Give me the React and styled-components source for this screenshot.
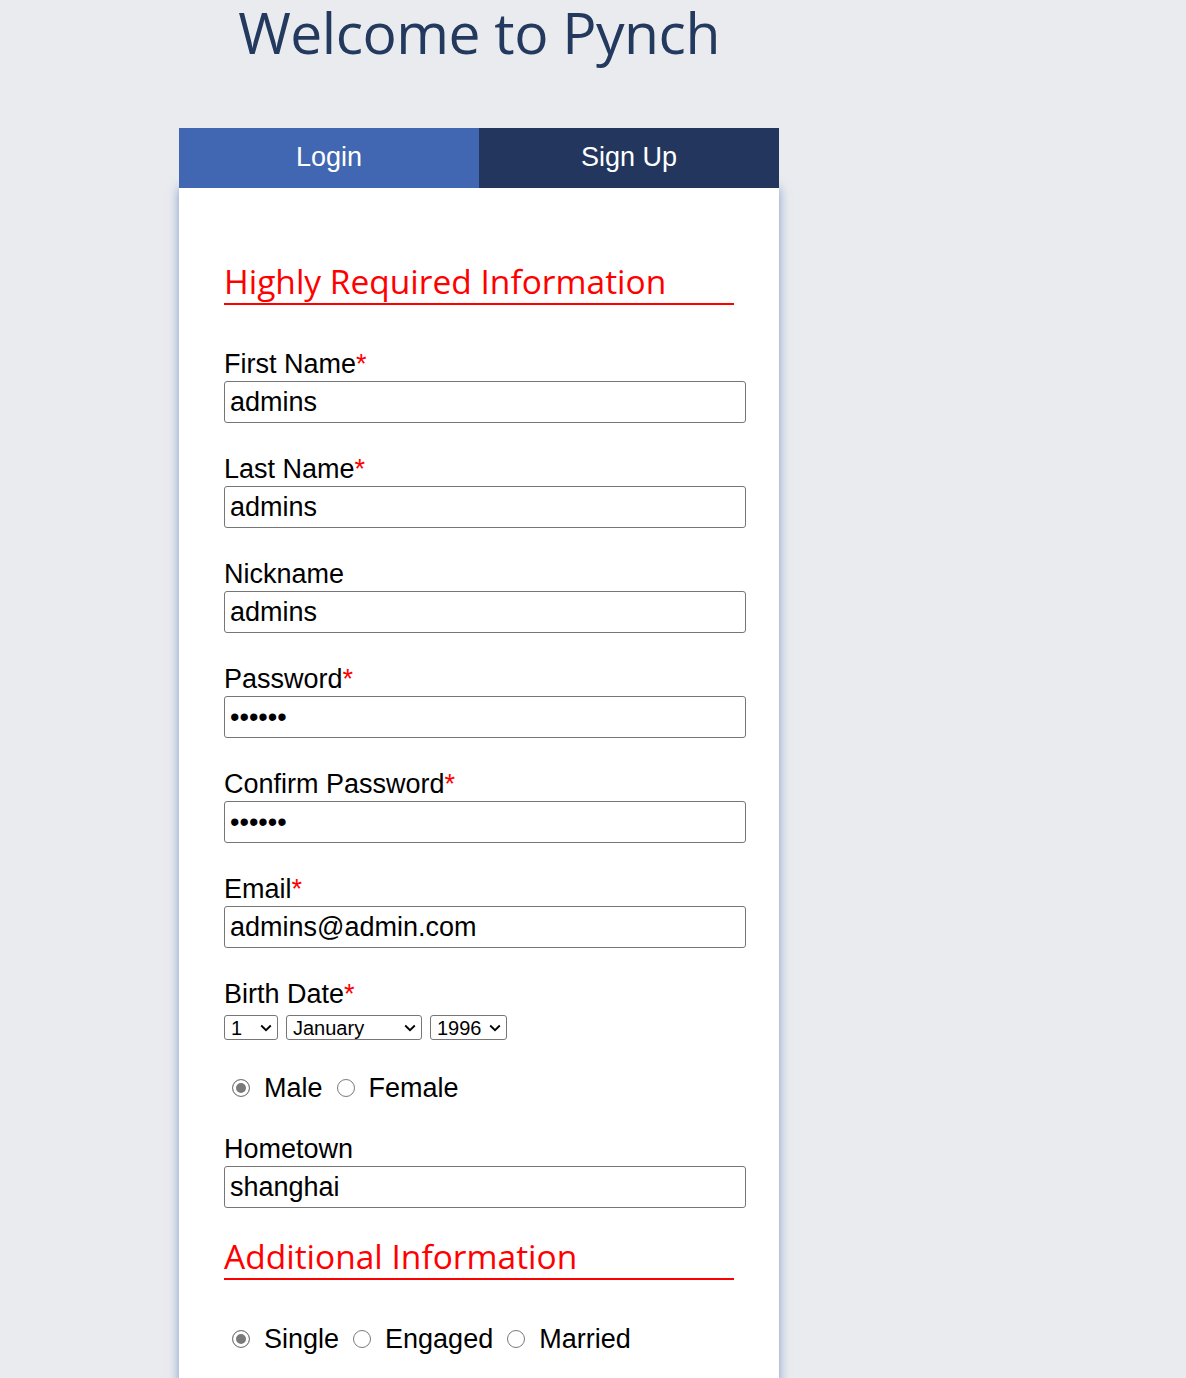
import React from 'react';
import styled, { createGlobalStyle } from 'styled-components';

const GlobalStyle = createGlobalStyle`
  html, body {
    margin: 0;
    padding: 0;
    background: #e9ebee;
  }
  body {
    font-family: "Liberation Sans", Arial, sans-serif;
    color: #000;
  }
`;

const Page = styled.div`
  padding-left: 179px;
  width: 600px;
`;

const Title = styled.h1`
  margin: 4px 0 67px;
  font-family: "Open Sans", "Noto Sans", sans-serif;
  font-weight: 400;
  font-size: 57px;
  line-height: 57px;
  letter-spacing: -0.5px;
  color: #23395d;
  text-align: center;
`;

const Tabs = styled.div`
  display: flex;
  height: 60px;
  position: relative;
  z-index: 1;
`;

const Tab = styled.div`
  flex: 1;
  display: flex;
  align-items: center;
  justify-content: center;
  padding-bottom: 1px;
  box-sizing: border-box;
  background: ${(p) => (p.$variant === 'light' ? '#4267b2' : '#23375e')};
  color: #fff;
  font-size: 27px;
  cursor: pointer;
`;

const Panel = styled.div`
  background: #fff;
  box-shadow: 0 0 10px rgba(66, 103, 178, 0.6);
  padding: 75px 45px 140px;
`;

const SectionTitle = styled.h2`
  margin: ${(p) => p.$top}px 0 0;
  font-family: "Open Sans", "Noto Sans", sans-serif;
  font-weight: 400;
  font-size: 33.5px;
  line-height: 36px;
  color: #ff0000;
  padding-bottom: 4px;
  border-bottom: 2px solid #ff0000;
`;

const Field = styled.div`
  margin-top: ${(p) => p.$top}px;
`;

const Label = styled.label`
  display: block;
  font-size: 27px;
  line-height: 30px;
  height: 30px;
`;

const Star = styled.span`
  color: #ff0000;
`;

const Input = styled.input`
  display: block;
  box-sizing: content-box;
  width: 100%;
  margin: 2px 0 0;
  padding: 5px;
  border: 1px solid #767676;
  border-radius: 3px;
  font-family: "Liberation Sans", Arial, sans-serif;
  font-size: 27px;
  line-height: 30px;
  height: 30px;
  color: #000;
  background: #fff;
  outline: none;
`;

const SelectRow = styled.div`
  display: flex;
  gap: 8px;
  margin-top: 6px;
`;

const SelectWrap = styled.div`
  position: relative;
  width: ${(p) => p.$w}px;
  height: 25px;
`;

const Select = styled.select`
  appearance: none;
  -webkit-appearance: none;
  width: 100%;
  height: 25px;
  box-sizing: border-box;
  padding: 1px 0 0 6px;
  border: 1px solid #767676;
  border-radius: 3px;
  background: #fff;
  font-family: "Liberation Sans", Arial, sans-serif;
  font-size: 20px;
  line-height: 22px;
  color: #000;
  outline: none;
`;

const Chevron = styled.svg`
  position: absolute;
  right: 6px;
  top: 9px;
  width: 12px;
  height: 8px;
  pointer-events: none;
`;

const RadioRow = styled.div`
  display: flex;
  align-items: center;
  height: 30px;
  margin-top: ${(p) => p.$top}px;
  font-size: 27px;
  line-height: 30px;
`;

const RadioOption = styled.label`
  display: flex;
  align-items: center;
  margin-right: 6px;
`;

const Radio = styled.input`
  appearance: none;
  -webkit-appearance: none;
  flex-shrink: 0;
  box-sizing: border-box;
  width: 18px;
  height: 18px;
  margin: 0 14px 0 8px;
  border: 1px solid #7a7a7a;
  border-radius: 50%;
  background: #fff;

  &:checked {
    background: #7a7a7a;
    box-shadow: inset 0 0 0 3px #fff;
  }
`;

const days = Array.from({ length: 31 }, (_, i) => i + 1);
const months = [
  'January', 'February', 'March', 'April', 'May', 'June',
  'July', 'August', 'September', 'October', 'November', 'December',
];
const years = Array.from({ length: 60 }, (_, i) => 2018 - i);

const TextField = ({ label, required, value, type = 'text', top }) => (
  <Field $top={top}>
    <Label>
      {label}
      {required && <Star>*</Star>}
    </Label>
    <Input type={type} defaultValue={value} />
  </Field>
);

const DropDown = ({ w, value, options }) => (
  <SelectWrap $w={w}>
    <Select defaultValue={value}>
      {options.map((o) => (
        <option key={o} value={o}>{o}</option>
      ))}
    </Select>
    <Chevron viewBox="0 0 12 8">
      <path d="M1.2 1.5 L6 6.2 L10.8 1.5" fill="none" stroke="#000" strokeWidth="1.8" />
    </Chevron>
  </SelectWrap>
);

export default function App() {
  return (
    <>
      <GlobalStyle />
      <Page>
        <Title>Welcome to Pynch</Title>
        <Tabs>
          <Tab $variant="light">Login</Tab>
          <Tab $variant="dark">Sign Up</Tab>
        </Tabs>
        <Panel>
          <SectionTitle $top={0}>Highly Required Information</SectionTitle>
          <TextField top={44} label="First Name" required value="admins" />
          <TextField top={31} label="Last Name" required value="admins" />
          <TextField top={31} label="Nickname" value="admins" />
          <TextField top={31} label="Password" required value="admins" type="password" />
          <TextField top={31} label="Confirm Password" required value="admins" type="password" />
          <TextField top={31} label="Email" required value="admins@admin.com" />
          <Field $top={31}>
            <Label>
              Birth Date<Star>*</Star>
            </Label>
            <SelectRow>
              <DropDown w={54} value={1} options={days} />
              <DropDown w={136} value="January" options={months} />
              <DropDown w={77} value={1996} options={years} />
            </SelectRow>
          </Field>
          <RadioRow $top={33}>
            <RadioOption>
              <Radio type="radio" name="gender" defaultChecked />
              Male
            </RadioOption>
            <RadioOption>
              <Radio type="radio" name="gender" />
              Female
            </RadioOption>
          </RadioRow>
          <TextField top={31} label="Hometown" value="shanghai" />
          <SectionTitle $top={30}>Additional Information</SectionTitle>
          <RadioRow $top={44}>
            <RadioOption>
              <Radio type="radio" name="status" defaultChecked />
              Single
            </RadioOption>
            <RadioOption>
              <Radio type="radio" name="status" />
              Engaged
            </RadioOption>
            <RadioOption>
              <Radio type="radio" name="status" />
              Married
            </RadioOption>
          </RadioRow>
        </Panel>
      </Page>
    </>
  );
}
